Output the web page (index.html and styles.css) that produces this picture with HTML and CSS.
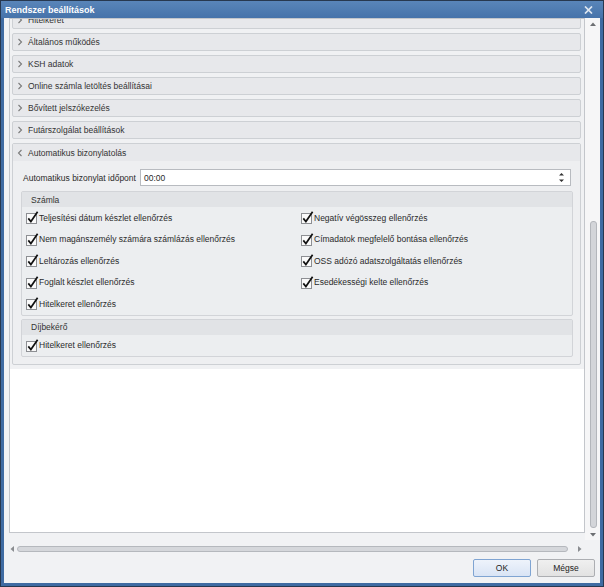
FILE: index.html
```html
<!DOCTYPE html>
<html lang="hu">
<head>
<meta charset="utf-8">
<title>Rendszer beállítások</title>
<link rel="stylesheet" href="styles.css">
</head>
<body>
<div class="window">
  <div class="titlebar">
    <span class="title">Rendszer beállítások</span>
    <svg class="close" width="9" height="8" viewBox="0 0 9 8"><path d="M1 0.5 L8 7.5 M8 0.5 L1 7.5" stroke="#dfe7f1" stroke-width="1.7"/></svg>
  </div>
  <div class="client">
    <div class="main">
      <div class="viewport">
        <div class="list">
          <div class="section"><div class="sec-head"><svg class="chev" width="6" height="8" viewBox="0 0 6 8"><path d="M1.5 1 L4.5 4 L1.5 7" fill="none" stroke="#7a7a7a" stroke-width="1.1"/></svg>Hitelkeret</div></div>
          <div class="section"><div class="sec-head"><svg class="chev" width="6" height="8" viewBox="0 0 6 8"><path d="M1.5 1 L4.5 4 L1.5 7" fill="none" stroke="#7a7a7a" stroke-width="1.1"/></svg>Általános működés</div></div>
          <div class="section"><div class="sec-head"><svg class="chev" width="6" height="8" viewBox="0 0 6 8"><path d="M1.5 1 L4.5 4 L1.5 7" fill="none" stroke="#7a7a7a" stroke-width="1.1"/></svg>KSH adatok</div></div>
          <div class="section"><div class="sec-head"><svg class="chev" width="6" height="8" viewBox="0 0 6 8"><path d="M1.5 1 L4.5 4 L1.5 7" fill="none" stroke="#7a7a7a" stroke-width="1.1"/></svg>Online számla letöltés beállításai</div></div>
          <div class="section"><div class="sec-head"><svg class="chev" width="6" height="8" viewBox="0 0 6 8"><path d="M1.5 1 L4.5 4 L1.5 7" fill="none" stroke="#7a7a7a" stroke-width="1.1"/></svg>Bővített jelszókezelés</div></div>
          <div class="section"><div class="sec-head"><svg class="chev" width="6" height="8" viewBox="0 0 6 8"><path d="M1.5 1 L4.5 4 L1.5 7" fill="none" stroke="#7a7a7a" stroke-width="1.1"/></svg>Futárszolgálat beállítások</div></div>
          <div class="section open">
            <div class="sec-head"><svg class="chev" width="6" height="8" viewBox="0 0 6 8"><path d="M4.5 1 L1.5 4 L4.5 7" fill="none" stroke="#7a7a7a" stroke-width="1.1"/></svg>Automatikus bizonylatolás</div>
            <div class="sec-body">
              <div class="time-row">
                <span class="time-label">Automatikus bizonylat időpont</span>
                <div class="spin-input">
                  <span>00:00</span>
                  <svg class="spin" width="5" height="11" viewBox="0 0 5 11"><path d="M0 3.5 L2.5 1 L5 3.5 Z M0 7.5 L2.5 10 L5 7.5 Z" fill="#333"/></svg>
                </div>
              </div>
              <div class="group">
                <div class="group-head">Számla</div>
                <div class="group-grid">
                  <div class="cb"><svg width="13" height="13" viewBox="0 0 13 13"><rect x="0.5" y="2.5" width="10" height="10" fill="#fafafa" stroke="#8d8f93"/><path d="M2.3 7.4 L4.9 10.6 L11.6 0.8" fill="none" stroke="#111" stroke-width="1.7"/></svg>Teljesítési dátum készlet ellenőrzés</div>
                  <div class="cb"><svg width="13" height="13" viewBox="0 0 13 13"><rect x="0.5" y="2.5" width="10" height="10" fill="#fafafa" stroke="#8d8f93"/><path d="M2.3 7.4 L4.9 10.6 L11.6 0.8" fill="none" stroke="#111" stroke-width="1.7"/></svg>Nem magánszemély számára számlázás ellenőrzés</div>
                  <div class="cb"><svg width="13" height="13" viewBox="0 0 13 13"><rect x="0.5" y="2.5" width="10" height="10" fill="#fafafa" stroke="#8d8f93"/><path d="M2.3 7.4 L4.9 10.6 L11.6 0.8" fill="none" stroke="#111" stroke-width="1.7"/></svg>Leltározás ellenőrzés</div>
                  <div class="cb"><svg width="13" height="13" viewBox="0 0 13 13"><rect x="0.5" y="2.5" width="10" height="10" fill="#fafafa" stroke="#8d8f93"/><path d="M2.3 7.4 L4.9 10.6 L11.6 0.8" fill="none" stroke="#111" stroke-width="1.7"/></svg>Foglalt készlet ellenőrzés</div>
                  <div class="cb"><svg width="13" height="13" viewBox="0 0 13 13"><rect x="0.5" y="2.5" width="10" height="10" fill="#fafafa" stroke="#8d8f93"/><path d="M2.3 7.4 L4.9 10.6 L11.6 0.8" fill="none" stroke="#111" stroke-width="1.7"/></svg>Hitelkeret ellenőrzés</div>
                  <div class="cb"><svg width="13" height="13" viewBox="0 0 13 13"><rect x="0.5" y="2.5" width="10" height="10" fill="#fafafa" stroke="#8d8f93"/><path d="M2.3 7.4 L4.9 10.6 L11.6 0.8" fill="none" stroke="#111" stroke-width="1.7"/></svg>Negatív végösszeg ellenőrzés</div>
                  <div class="cb"><svg width="13" height="13" viewBox="0 0 13 13"><rect x="0.5" y="2.5" width="10" height="10" fill="#fafafa" stroke="#8d8f93"/><path d="M2.3 7.4 L4.9 10.6 L11.6 0.8" fill="none" stroke="#111" stroke-width="1.7"/></svg>Címadatok megfelelő bontása ellenőrzés</div>
                  <div class="cb"><svg width="13" height="13" viewBox="0 0 13 13"><rect x="0.5" y="2.5" width="10" height="10" fill="#fafafa" stroke="#8d8f93"/><path d="M2.3 7.4 L4.9 10.6 L11.6 0.8" fill="none" stroke="#111" stroke-width="1.7"/></svg>OSS adózó adatszolgáltatás ellenőrzés</div>
                  <div class="cb"><svg width="13" height="13" viewBox="0 0 13 13"><rect x="0.5" y="2.5" width="10" height="10" fill="#fafafa" stroke="#8d8f93"/><path d="M2.3 7.4 L4.9 10.6 L11.6 0.8" fill="none" stroke="#111" stroke-width="1.7"/></svg>Esedékességi kelte ellenőrzés</div>
                </div>
              </div>
              <div class="group group-small">
                <div class="group-head">Díjbekérő</div>
                <div class="group-grid single">
                  <div class="cb"><svg width="13" height="13" viewBox="0 0 13 13"><rect x="0.5" y="2.5" width="10" height="10" fill="#fafafa" stroke="#8d8f93"/><path d="M2.3 7.4 L4.9 10.6 L11.6 0.8" fill="none" stroke="#111" stroke-width="1.7"/></svg>Hitelkeret ellenőrzés</div>
                </div>
              </div>
            </div>
          </div>
        </div>
      </div>
      <div class="vscroll">
        <svg width="6" height="4" viewBox="0 0 6 4"><path d="M0 4 L3 0.5 L6 4 Z" fill="#6d6f73"/></svg>
        <div class="vtrack"><div class="vthumb"></div></div>
        <svg width="6" height="4" viewBox="0 0 6 4"><path d="M0 0 L3 3.5 L6 0 Z" fill="#6d6f73"/></svg>
      </div>
    </div>
    <div class="hscroll">
      <svg width="4" height="6" viewBox="0 0 4 6"><path d="M4 0 L0.5 3 L4 6 Z" fill="#8a8c90"/></svg>
      <div class="hthumb"></div>
      <svg width="4" height="6" viewBox="0 0 4 6"><path d="M0 0 L3.5 3 L0 6 Z" fill="#8a8c90"/></svg>
    </div>
    <div class="buttons">
      <button class="btn btn-default">OK</button>
      <button class="btn">Mégse</button>
    </div>
  </div>
</div>
</body>
</html>
```
FILE: styles.css
```css
html, body {
  margin: 0;
  padding: 0;
  background: #ffffff;
}
body {
  font-family: "Liberation Sans", Arial, sans-serif;
  font-size: 8.5px;
  color: #2a2a2a;
}
.window {
  width: 604px;
  height: 587px;
  box-sizing: border-box;
  border: 1px solid #27384f;
  background: #3f6ba2;
  display: flex;
  flex-direction: column;
}
.titlebar {
  flex: none;
  height: 17px;
  display: flex;
  align-items: center;
  justify-content: space-between;
  padding: 0 10px 0 4px;
  background: linear-gradient(#5985b9, #4673aa);
}
.title {
  color: #ffffff;
  font-weight: bold;
  font-size: 9px;
}
.close {
  display: block;
}
.client {
  flex: 1;
  margin: 0 3px 3px 3px;
  background: #f1f2f4;
  display: flex;
  flex-direction: column;
  min-height: 0;
}
.main {
  flex: none;
  height: 522px;
  display: flex;
}
.viewport {
  flex: 1;
  margin: 0 0 7px 5px;
  border: 1px solid #c3c6cb;
  background: #ffffff;
  overflow: hidden;
}
.list {
  margin-top: -8px;
  padding: 0 3px 4px 2px;
  background: #f0f1f3;
  display: flex;
  flex-direction: column;
  gap: 4px;
}
.section {
  border: 1px solid #cdd0d4;
  border-radius: 2px;
  background: #e7e8eb;
}
.sec-head {
  height: 16px;
  display: flex;
  align-items: center;
  padding-left: 4px;
  color: #333333;
}
.chev {
  display: block;
  margin-right: 5px;
}
.section.open {
  background: #eeeff1;
}
.section.open .sec-head {
  height: 17px;
  background: #e7e8eb;
}
.sec-body {
  padding: 8px 7px 7px 8px;
}
.time-row {
  display: flex;
  align-items: center;
}
.time-label {
  flex: 0 0 117px;
  margin-left: 2px;
}
.spin-input {
  flex: 1;
  height: 15px;
  margin-right: 2px;
  border: 1px solid #b8bbc0;
  background: #ffffff;
  display: flex;
  align-items: center;
  justify-content: space-between;
  padding: 0 6px 0 3px;
}
.spin {
  display: block;
}
.group {
  margin-top: 5px;
  border: 1px solid #d2d4d8;
  border-radius: 2px;
  background: #eceef0;
}
.group-small {
  margin-top: 3px;
}
.group-head {
  height: 15px;
  display: flex;
  align-items: center;
  padding-left: 9px;
  background: #e1e3e6;
  color: #333333;
}
.group-grid {
  display: grid;
  grid-template-columns: 275px 1fr;
  grid-template-rows: repeat(5, 21.5px);
  grid-auto-flow: column;
  padding-left: 4px;
}
.group-grid.single {
  grid-template-rows: 21px;
}
.cb {
  display: flex;
  align-items: center;
  white-space: nowrap;
}
.cb svg {
  display: block;
  flex: none;
}
.vscroll {
  flex: none;
  width: 15px;
  background: #f6f6f7;
  display: flex;
  flex-direction: column;
  align-items: center;
  padding: 4px 0 3px 0;
  box-sizing: border-box;
}
.vscroll svg {
  display: block;
  flex: none;
}
.vtrack {
  flex: 1;
  display: flex;
  flex-direction: column;
  justify-content: flex-end;
  padding: 0 0 2px 1px;
  margin-bottom: 3px;
}
.vthumb {
  width: 5px;
  height: 305px;
  border: 1px solid #b3b6bb;
  border-radius: 3px;
  background: #d3d5d9;
}
.hscroll {
  flex: none;
  height: 14px;
  margin: 2px 15px 0 5px;
  display: flex;
  align-items: center;
  padding: 0 3px 0 1px;
}
.hscroll svg {
  display: block;
  flex: none;
}
.hthumb {
  flex: 1;
  height: 4px;
  margin: 0 10px 0 3px;
  border: 1px solid #b5b8bd;
  border-radius: 3px;
  background: #d5d7db;
}
.buttons {
  flex: none;
  display: flex;
  justify-content: flex-end;
  gap: 6px;
  margin-top: 3px;
  padding-right: 5px;
}
.btn {
  width: 58px;
  height: 18px;
  padding: 0;
  font-family: "Liberation Sans", Arial, sans-serif;
  font-size: 8.5px;
  color: #222222;
  border: 1px solid #acaeb2;
  border-radius: 2px;
  background: linear-gradient(#f0f0f0, #e2e2e2);
}
.btn-default {
  border-color: #7fa4d2;
  background: linear-gradient(#eef3fb, #d9e4f5);
}
```
